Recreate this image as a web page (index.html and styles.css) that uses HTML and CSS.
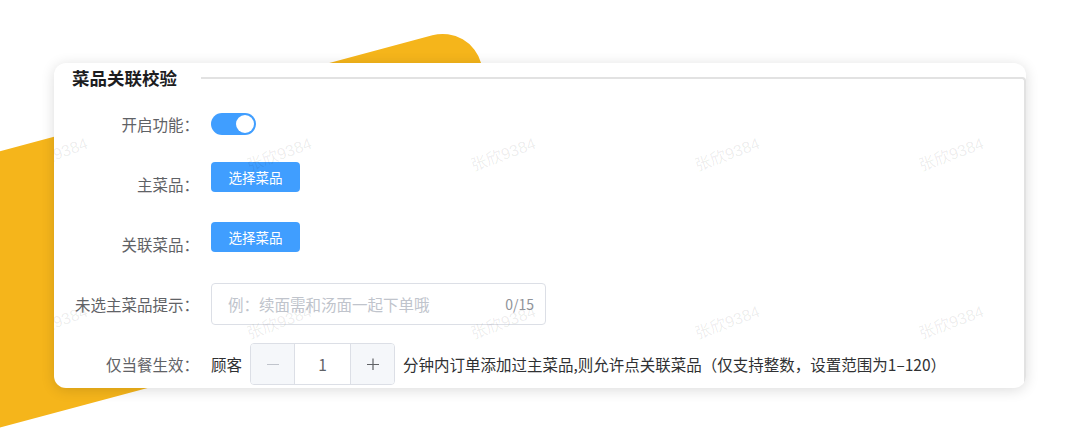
FILE: index.html
```html
<!doctype html>
<html lang="zh-CN">
  <head>
    <meta charset="UTF-8" />
    <meta name="viewport" content="width=device-width, initial-scale=1.0"/>
    <title>菜品关联校验</title>
    <link rel="stylesheet" href="styles.css">
  </head>
  <body>
    <div class="stage">
      <div class="ribbon"></div>

      <div class="card">
        <fieldset class="panel">
          <legend class="panel-title">菜品关联校验</legend>

          <div class="form">
            <div class="form-item">
              <label class="form-label">开启功能：</label>
              <div class="form-control">
                <span class="switch"><span class="switch-knob"></span></span>
              </div>
            </div>

            <div class="form-item">
              <label class="form-label">主菜品：</label>
              <button class="btn">选择菜品</button>
            </div>

            <div class="form-item">
              <label class="form-label">关联菜品：</label>
              <button class="btn">选择菜品</button>
            </div>

            <div class="form-item">
              <label class="form-label" for="tip">未选主菜品提示：</label>
              <div class="textbox">
                <input type="text" id="tip" placeholder="例：续面需和汤面一起下单哦" />
                <span class="counter">0/15</span>
              </div>
            </div>

            <div class="form-item">
              <label class="form-label">仅当餐生效：</label>
              <div class="form-control">
                <span class="text">顾客</span>
                <div class="stepper">
                  <span class="step-btn step-minus">
                    <svg width="12" height="12" viewBox="0 0 12 12"><path d="M0 6.5h12" stroke="currentColor" stroke-width="1.2"/></svg>
                  </span>
                  <span class="step-value">1</span>
                  <span class="step-btn step-plus">
                    <svg width="12" height="12" viewBox="0 0 12 12"><path d="M0 6.5h12M6 0.5v12" stroke="currentColor" stroke-width="1.2"/></svg>
                  </span>
                </div>
                <span class="text">分钟内订单添加过主菜品,则允许点关联菜品（仅支持整数，设置范围为1–120）</span>
              </div>
            </div>
          </div>
        </fieldset>

        <div class="watermarks">
          <span>张欣9384</span><span>张欣9384</span><span>张欣9384</span><span>张欣9384</span><span>张欣9384</span>
          <span>张欣9384</span><span>张欣9384</span><span>张欣9384</span><span>张欣9384</span><span>张欣9384</span>
        </div>
      </div>
    </div>
  </body>
</html>
```

FILE: styles.css
```css
* {
  box-sizing: border-box;
}
body {
  margin: 0;
  font-family: "Noto Sans CJK SC", sans-serif;
  background: #fff;
  overflow: hidden;
}
.stage {
  position: relative;
  height: 437px;
  padding: 63px 0 0 54px;
}
/* yellow decoration behind the card */
.ribbon {
  position: absolute;
  left: -149px;
  top: 25px;
  width: 620px;
  height: 267px;
  background: #f5b51b;
  border-radius: 40px;
  transform-origin: 100% 0;
  transform: rotate(-15deg);
}
.card {
  position: relative;
  z-index: 1;
  width: 972px;
  height: 325px;
  padding-top: 3px;
  background: #fff;
  border-radius: 12px;
  box-shadow: 0 2px 14px rgba(0, 0, 0, 0.14);
  overflow: hidden;
}
.panel {
  margin: 0;
  padding: 0;
  min-width: 0;
  height: 100%;
  border: 0;
  border-top: 2px solid #e2e2e2;
  border-right: 2px solid #e2e2e2;
  border-top-right-radius: 4px;
}
.panel-title {
  padding: 0 24px 0 18px;
  font-size: 17.5px;
  font-weight: 700;
  line-height: 24px;
  color: #1d1d1f;
}
.form {
  display: flex;
  flex-direction: column;
  gap: 20px;
  padding-top: 14px;
}
.form-item {
  display: flex;
  align-items: center;
  height: 40px;
}
.form-label {
  flex: none;
  width: 157px;
  padding-right: 12px;
  text-align: right;
  font-size: 15.5px;
  line-height: 40px;
  color: #5f6266;
}
.form-control {
  display: flex;
  align-items: center;
}
.switch {
  display: flex;
  justify-content: flex-end;
  align-items: center;
  width: 45px;
  height: 22px;
  padding: 0 2px;
  border-radius: 11px;
  background: #409eff;
}
.switch-knob {
  width: 18px;
  height: 18px;
  border-radius: 50%;
  background: #fff;
}
.btn {
  align-self: flex-start;
  margin-top: -2px;
  width: 89px;
  height: 30px;
  padding: 0;
  border: 0;
  border-radius: 4px;
  background: #409eff;
  color: #fff;
  font-family: inherit;
  font-size: 13.5px;
  cursor: pointer;
}
.textbox {
  display: flex;
  align-items: center;
  width: 335px;
  height: 42px;
  padding: 0 11px 0 16px;
  border: 1px solid #dcdfe6;
  border-radius: 4px;
}
.textbox input {
  flex: 1;
  min-width: 0;
  padding: 0;
  border: 0;
  outline: 0;
  background: transparent;
  font-family: inherit;
  font-size: 15.5px;
  color: #606266;
}
.textbox input::placeholder {
  color: #c0c4cc;
}
.counter {
  font-size: 14px;
  color: #909399;
}
.text {
  font-size: 15.5px;
  color: #303133;
  white-space: nowrap;
}
.stepper {
  display: flex;
  height: 42px;
  margin: 0 8px 0 8px;
  border: 1px solid #dcdfe6;
  border-radius: 4px;
  overflow: hidden;
}
.step-btn {
  display: flex;
  align-items: center;
  justify-content: center;
  width: 44px;
  background: #f5f7fa;
  color: #606266;
}
.step-minus {
  border-right: 1px solid #dcdfe6;
  color: #c0c4cc;
}
.step-plus {
  border-left: 1px solid #dcdfe6;
}
.step-value {
  display: flex;
  align-items: center;
  justify-content: center;
  width: 55px;
  font-size: 15.5px;
  color: #606266;
}
.watermarks {
  position: absolute;
  top: 6px;
  left: -111px;
  z-index: 2;
  display: grid;
  grid-template-columns: repeat(5, 224px);
  grid-auto-rows: 168px;
  place-items: center;
  pointer-events: none;
}
.watermarks span {
  transform: rotate(-20deg);
  font-family: "Liberation Sans", "Noto Sans CJK SC", sans-serif;
  font-size: 16px;
  color: rgba(0, 0, 0, 0.08);
  white-space: nowrap;
}
```
